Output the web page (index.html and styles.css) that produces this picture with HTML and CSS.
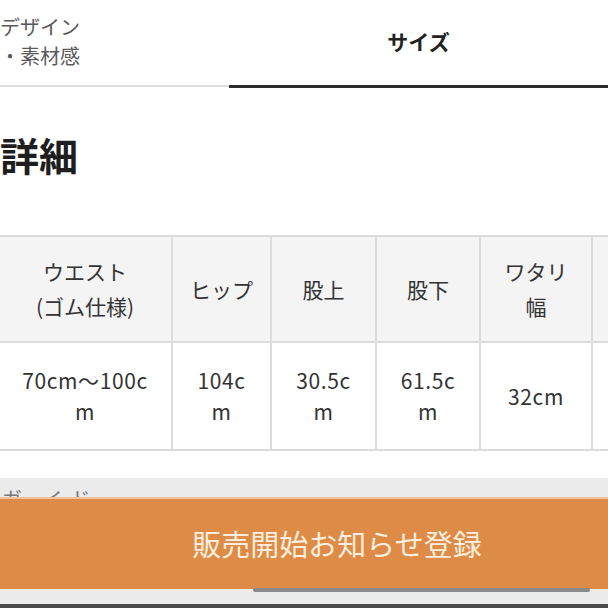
FILE: index.html
```html
<!DOCTYPE html>
<html lang="ja">
<head>
<meta charset="utf-8">
<link rel="stylesheet" href="styles.css">
</head>
<body>
<div class="page">
  <div class="tabs">
    <div class="tab tab-left">デザイン<br>・素材感</div>
    <div class="tab tab-active">サイズ</div>
  </div>
  <h2 class="heading">詳細</h2>
  <div class="table-wrap">
    <table class="size-table">
      <colgroup>
        <col class="c1"><col class="c2"><col class="c3"><col class="c4"><col class="c5"><col class="c6">
      </colgroup>
      <tr class="head">
        <th>ウエスト<br>(ゴム仕様)</th>
        <th>ヒップ</th>
        <th>股上</th>
        <th>股下</th>
        <th>ワタリ<br>幅</th>
        <th></th>
      </tr>
      <tr class="data">
        <td>70cm〜100c<br>m</td>
        <td>104c<br>m</td>
        <td>30.5c<br>m</td>
        <td>61.5c<br>m</td>
        <td>32cm</td>
        <td></td>
      </tr>
    </table>
  </div>
  <div class="gap"></div>
  <div class="guide">
    <span class="guide-text">ガ イド</span>
  </div>
</div>
<div class="cta">
  <button class="cta-btn">販売開始お知らせ登録</button>
  <div class="home-zone"><span class="home-bar"></span></div>
  <div class="bottom-edge"></div>
</div>
</body>
</html>
```
FILE: styles.css
```css
html, body {
  margin: 0;
  padding: 0;
  background: #ffffff;
  width: 608px;
  height: 608px;
  overflow: hidden;
  font-family: "Noto Sans CJK JP", "Noto Sans", sans-serif;
}

.page {
  width: 608px;
  overflow: hidden;
}

.tabs {
  display: grid;
  grid-template-columns: 229px 1fr;
  height: 88px;
}

.tab {
  box-sizing: border-box;
}

.tab-left {
  font-size: 20px;
  line-height: 29px;
  color: #5a5a5a;
  padding-top: 12px;
  border-bottom: 2px solid #dddddd;
  height: 87px;
}

.tab-active {
  display: flex;
  align-items: center;
  justify-content: center;
  font-size: 21px;
  font-weight: 700;
  color: #222222;
  border-bottom: 3px solid #2b2b2b;
  height: 88px;
  padding-bottom: 4px;
}

.heading {
  margin: 0;
  padding-top: 43px;
  height: 147px;
  box-sizing: border-box;
  font-size: 39px;
  line-height: 46px;
  font-weight: 700;
  color: #1e1e1e;
}

.table-wrap {
  width: 608px;
  overflow: hidden;
}

.size-table {
  border-collapse: collapse;
  table-layout: fixed;
  width: 720px;
  margin-left: -3px;
  color: #333333;
  font-size: 21px;
}

.c1 { width: 174px; }
.c2 { width: 99px; }
.c3 { width: 105px; }
.c4 { width: 104px; }
.c5 { width: 112px; }
.c6 { width: 126px; }

.size-table th,
.size-table td {
  border: 2px solid #dcdcdc;
  text-align: center;
  white-space: nowrap;
  padding: 0;
  font-weight: 400;
}

.head th {
  background: #f4f4f4;
  height: 104px;
  line-height: 35px;
}

.data td {
  background: #ffffff;
  height: 106px;
  line-height: 31px;
  letter-spacing: 0.6px;
}

.gap {
  height: 27px;
}

.guide {
  background: #ebebeb;
  height: 140px;
  position: relative;
}

.guide-text {
  position: absolute;
  left: 2px;
  top: 6px;
  font-size: 20px;
  color: #777777;
  letter-spacing: 8px;
}

.cta {
  position: fixed;
  left: 0;
  right: 0;
  top: 497px;
  display: flex;
  flex-direction: column;
}

.cta-btn {
  display: block;
  width: 608px;
  height: 92px;
  margin: 0;
  border: 0;
  border-top: 2px solid #f0c39a;
  background: #dd8b46;
  color: #fbeede;
  font-family: "Noto Sans CJK JP", "Noto Sans", sans-serif;
  font-size: 29px;
  padding: 0 0 3px 66px;
  text-align: center;
}

.home-zone {
  height: 15px;
  background: #ececec;
  position: relative;
}

.home-bar {
  position: absolute;
  left: 253px;
  top: -1px;
  width: 337px;
  height: 4px;
  border-radius: 2px;
  background: #8a8a8a;
}

.bottom-edge {
  height: 4px;
  background: #4a4a4a;
}
```
